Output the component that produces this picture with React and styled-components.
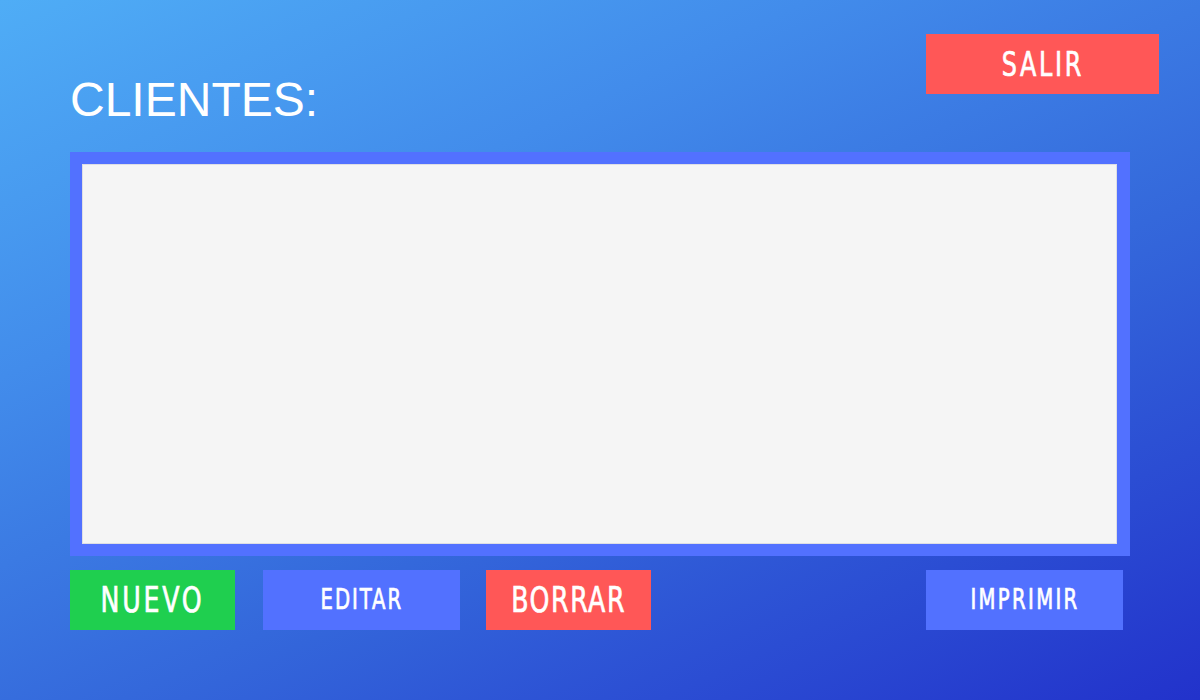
import styled, { createGlobalStyle } from "styled-components";

const GlobalStyle = createGlobalStyle`
  html, body {
    margin: 0;
    padding: 0;
  }
  body {
    font-family: "Liberation Sans", Arial, sans-serif;
  }
`;

const Page = styled.div`
  width: 1200px;
  height: 700px;
  box-sizing: border-box;
  padding: 34px 41px 0 70px;
  background: linear-gradient(155deg, #4fadf6 0%, #428ceb 30%, #3468db 60%, #2232cb 100%);
  display: flex;
  flex-direction: column;
`;

const Header = styled.header`
  display: flex;
  justify-content: space-between;
  align-items: flex-start;
  margin-bottom: 25px;
`;

const Title = styled.h1`
  margin: 38px 0 0;
  font-family: "Liberation Sans", Arial, sans-serif;
  font-size: 48px;
  font-weight: 400;
  line-height: 55px;
  color: #ffffff;
`;

const Frame = styled.div`
  width: 1060px;
  height: 404px;
  box-sizing: border-box;
  padding: 12px 13px 12px 12px;
  background: #5271ff;
`;

const Sheet = styled.div`
  height: 100%;
  background: #f5f5f5;
  border: 1px solid #dedee4;
  box-sizing: border-box;
`;

const Actions = styled.div`
  width: 1053px;
  margin-top: 14px;
  display: flex;
  align-items: center;
`;

const Spacer = styled.div`
  flex: 1;
`;

const Button = styled.button`
  width: ${(p) => p.$w}px;
  height: 60px;
  margin-left: ${(p) => p.$gap || 0}px;
  border: none;
  padding: 0;
  background: ${(p) => p.$bg};
  color: #ffffff;
  cursor: pointer;
  display: flex;
  align-items: center;
  justify-content: center;
`;

const Label = styled.span`
  display: inline-block;
  font-family: "DejaVu Sans Condensed", "DejaVu Sans", sans-serif;
  font-size: ${(p) => p.$size || 34}px;
  font-weight: 400;
  line-height: 1;
  letter-spacing: ${(p) => p.$spacing || 1}px;
  -webkit-text-stroke: 0.7px #ffffff;
  transform: scaleX(0.78);
  white-space: nowrap;
`;

const App = () => {
  return (
    <>
      <GlobalStyle />
      <Page>
        <Header>
          <Title>CLIENTES:</Title>
          <Button $w={233} $bg="#ff5757">
            <Label $size={34} $spacing={3.5}>SALIR</Label>
          </Button>
        </Header>
        <Frame>
          <Sheet />
        </Frame>
        <Actions>
          <Button $w={165} $bg="#1fcf4f">
            <Label $size={36} $spacing={3.5}>NUEVO</Label>
          </Button>
          <Button $w={197} $bg="#5271ff" $gap={28}>
            <Label $size={28} $spacing={2.5}>EDITAR</Label>
          </Button>
          <Button $w={165} $bg="#ff5757" $gap={26}>
            <Label $size={36} $spacing={2}>BORRAR</Label>
          </Button>
          <Spacer />
          <Button $w={197} $bg="#5271ff">
            <Label $size={28} $spacing={3}>IMPRIMIR</Label>
          </Button>
        </Actions>
      </Page>
    </>
  );
};

export default App;
